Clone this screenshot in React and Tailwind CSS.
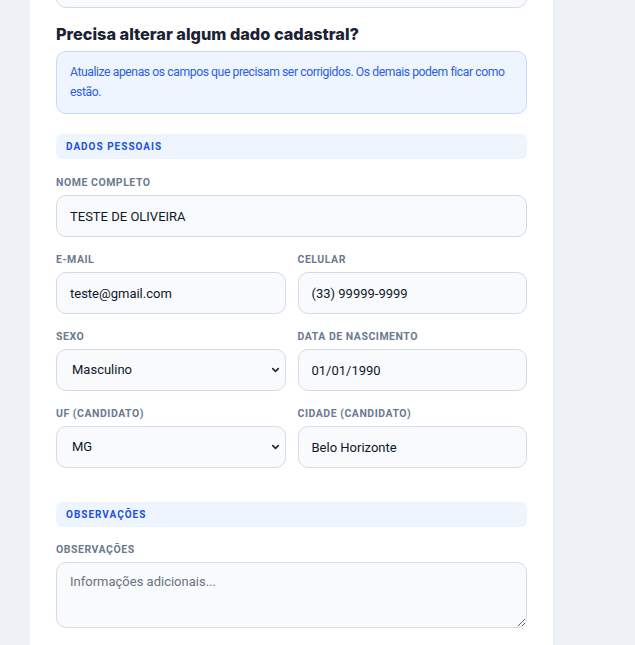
import { useState } from "react";
import { ChevronDown } from "lucide-react";

const fieldCls =
  "w-full h-[42px] rounded-[10px] border border-[#d3dbe6] bg-[#f8fafc] text-[13px] text-[#0f172a] focus:outline-none";
const inputCls = fieldCls + " px-[13px]";
const selectCls = fieldCls + " appearance-none pl-[15px] pr-[28px]";

function Label({ children }) {
  return (
    <label className="block mb-[5px] text-[10.5px] leading-[14px] font-bold tracking-[0.05em] text-[#6b7a90] uppercase">
      {children}
    </label>
  );
}

function Section({ children }) {
  return (
    <div className="h-[25px] flex items-center px-[10px] rounded-md bg-[#eef5ff] text-[10px] font-bold tracking-[0.1em] text-[#2150dd]">
      {children}
    </div>
  );
}

function Select({ name, value, onChange, options }) {
  return (
    <div className="relative">
      <select name={name} value={value} onChange={onChange} className={selectCls}>
        {options.map((o) => (
          <option key={o}>{o}</option>
        ))}
      </select>
      <ChevronDown
        size={11}
        strokeWidth={3.5}
        className="pointer-events-none absolute right-[5px] top-1/2 -translate-y-1/2 text-[#1f2937]"
        style={{ right: 5 }}
      />
    </div>
  );
}

export default function App() {
  const [form, setForm] = useState({
    nome: "TESTE DE OLIVEIRA",
    email: "teste@gmail.com",
    celular: "(33) 99999-9999",
    sexo: "Masculino",
    nascimento: "01/01/1990",
    uf: "MG",
    cidade: "Belo Horizonte",
    obs: "",
  });

  const onChange = (e) => {
    const { name, value } = e.target;
    setForm({ ...form, [name]: value });
  };

  return (
    <main
      className="h-screen bg-[#eef2f7] overflow-hidden"
      style={{ fontFamily: "Roboto, 'Noto Sans', sans-serif" }}
    >
      <div className="flow-root ml-[30px] w-[523px] h-full bg-white px-[26px] shadow-[1px_0_2px_rgba(15,23,42,0.04)]">
        {/* campo anterior, cortado no topo */}
        <input type="text" readOnly className={inputCls + " -mt-[34px] block"} />

        <h2
          className="mt-[15px] text-[16.3px] leading-[22px] font-extrabold text-[#1a2233]"
          style={{ fontFamily: "Inter, sans-serif" }}
        >
          Precisa alterar algum dado cadastral?
        </h2>

        <div className="mt-[6px] h-[63px] px-[13px] py-[10px] rounded-[10px] border border-[#c3dafe] bg-[#eef5ff] text-[12.2px] leading-[20px] tracking-[-0.035em] text-[#2f5fe0]">
          Atualize apenas os campos que precisam ser corrigidos. Os demais podem ficar como estão.
        </div>

        <div className="mt-[20px]">
          <Section>DADOS PESSOAIS</Section>
        </div>

        <form className="mt-[17px]">
          <div>
            <Label>Nome completo</Label>
            <input name="nome" value={form.nome} onChange={onChange} className={inputCls} />
          </div>

          <div className="mt-[16px] grid grid-cols-2 gap-x-3 gap-y-[16px]">
            <div>
              <Label>E-mail</Label>
              <input name="email" value={form.email} onChange={onChange} className={inputCls} />
            </div>
            <div>
              <Label>Celular</Label>
              <input name="celular" value={form.celular} onChange={onChange} className={inputCls} />
            </div>
            <div>
              <Label>Sexo</Label>
              <Select name="sexo" value={form.sexo} onChange={onChange} options={["Masculino", "Feminino"]} />
            </div>
            <div>
              <Label>Data de nascimento</Label>
              <input name="nascimento" value={form.nascimento} onChange={onChange} className={inputCls} />
            </div>
            <div>
              <Label>UF (candidato)</Label>
              <Select name="uf" value={form.uf} onChange={onChange} options={["MG", "SP", "RJ"]} />
            </div>
            <div>
              <Label>Cidade (candidato)</Label>
              <input name="cidade" value={form.cidade} onChange={onChange} className={inputCls} />
            </div>
          </div>

          <div className="mt-[34px]">
            <Section>OBSERVAÇÕES</Section>
          </div>

          <div className="mt-[16px]">
            <Label>Observações</Label>
            <textarea
              name="obs"
              value={form.obs}
              onChange={onChange}
              placeholder="Informações adicionais..."
              className="block w-full h-[66px] px-[13px] py-[9px] rounded-[10px] border border-[#d3dbe6] bg-[#f8fafc] text-[13px] leading-[20px] text-[#0f172a] placeholder:text-[#6b7280] focus:outline-none"
            />
          </div>
        </form>
      </div>
    </main>
  );
}
